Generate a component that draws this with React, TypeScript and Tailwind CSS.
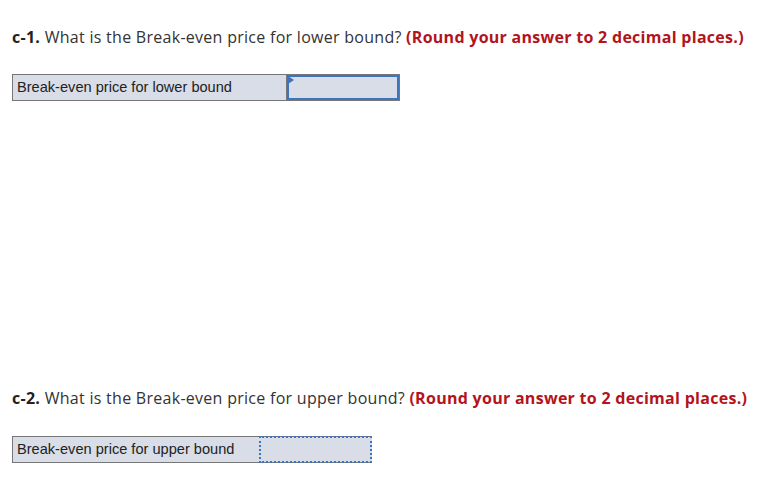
export default function App() {
  return (
    <div className="w-[772px] h-[477px] bg-white px-3 pt-[26px] font-['Open_Sans',sans-serif] text-[#333]">
      <p className="text-[16px] tracking-[0.28px] leading-[22px] whitespace-nowrap">
        <span className="font-bold text-[#222]">c-1.</span> What is the Break-even price for lower bound?{' '}
        <span className="font-bold text-[#b3141c]">(Round your answer to 2 decimal places.)</span>
      </p>

      <div className="mt-[26px] flex w-[388px] h-[27px] border border-[#777] bg-[#d9dde7]">
        <div className="w-[274px] border-r border-[#777] pl-1 flex items-center font-['Liberation_Sans',sans-serif] text-[14.6px] text-[#222]">
          Break-even price for lower bound
        </div>
        <div className="relative flex-1 border-2 border-[#3d74bd]">
          <span className="absolute left-[-1px] top-[-1px] w-0 h-0 border-y-[4px] border-y-transparent border-l-[6px] border-l-[#3d74bd]" />
        </div>
      </div>

      <p className="mt-[286px] text-[16px] tracking-[0.28px] leading-[22px] whitespace-nowrap">
        <span className="font-bold text-[#222]">c-2.</span> What is the Break-even price for upper bound?{' '}
        <span className="font-bold text-[#b3141c]">(Round your answer to 2 decimal places.)</span>
      </p>

      <div className="mt-[27px] flex w-[360px] h-[27px] border border-[#777] border-r-0 bg-[#d9dde7]">
        <div className="w-[246px] pl-1 flex items-center font-['Liberation_Sans',sans-serif] text-[14.6px] text-[#222]">
          Break-even price for upper bound
        </div>
        <div className="flex-1 -my-px border-2 border-dotted border-[#3d74bd]" />
      </div>
    </div>
  );
}
